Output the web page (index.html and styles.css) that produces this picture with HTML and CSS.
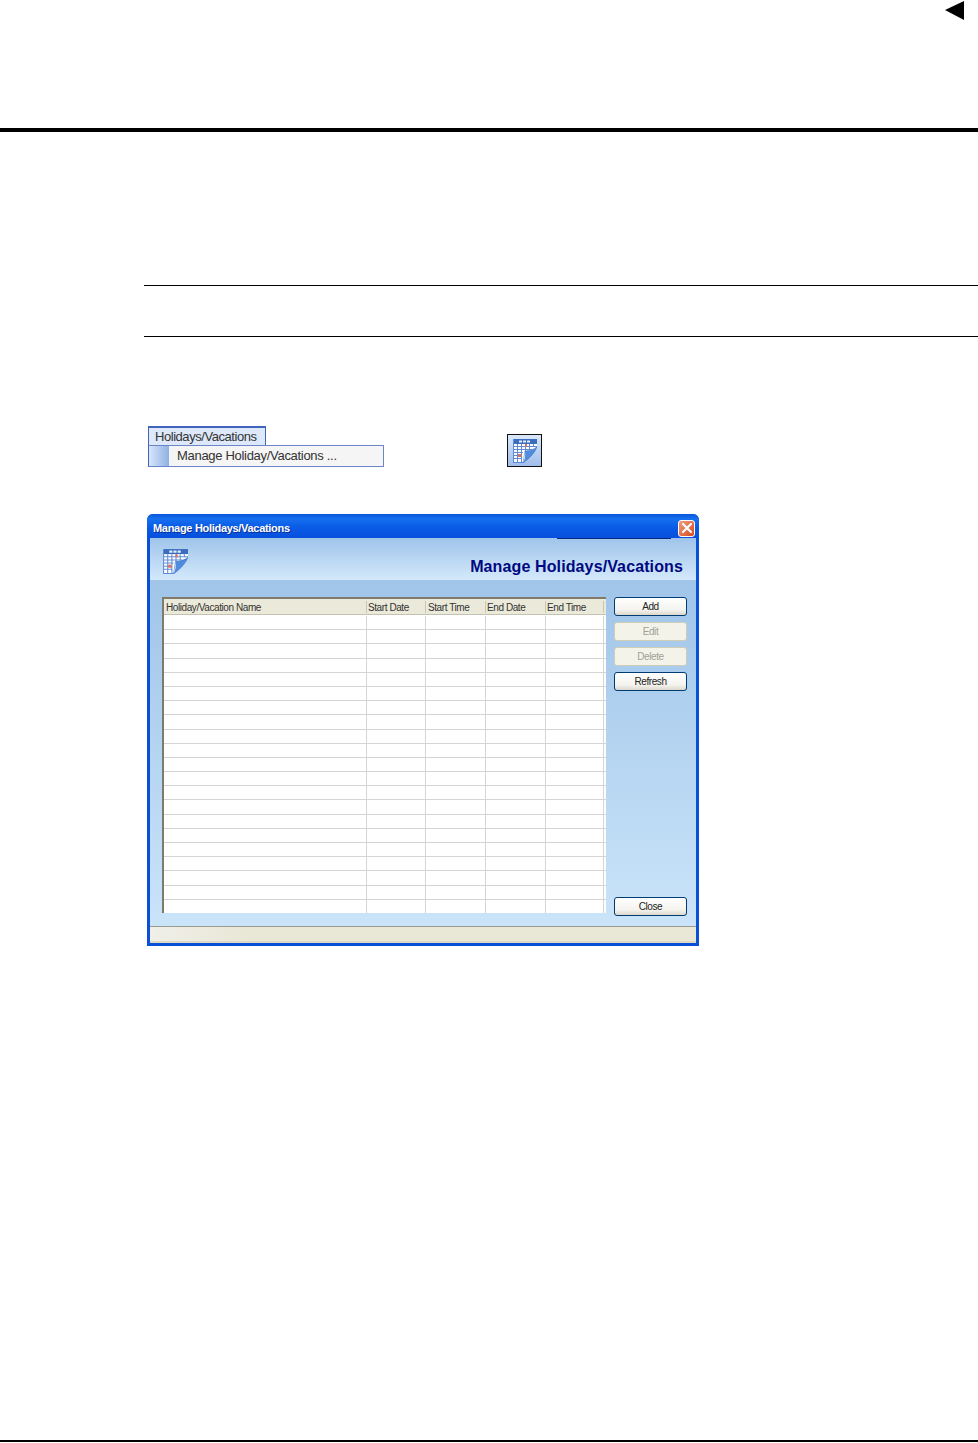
FILE: index.html
```html
<!DOCTYPE html>
<html lang="en">
<head>
<meta charset="utf-8">
<title>Manage Holidays/Vacations</title>
<link rel="stylesheet" href="styles.css">
</head>
<body>
<header class="top">
  <svg class="arrow" width="20" height="20" viewBox="0 0 20 20"><polygon points="0,10 19,1 19,20" fill="#000"/></svg>
</header>
<main class="content">
  <div class="note"></div>
  <div class="steps">
    <div class="menu">
      <div class="menu-tab">Holidays/Vacations</div>
      <div class="menu-item"><span class="menu-strip"></span><span class="menu-label">Manage Holiday/Vacations ...</span></div>
    </div>
    <div class="icon-btn">
      <svg width="25" height="25" viewBox="0 0 25 25"><use href="#cal"/></svg>
    </div>
  </div>
  <section class="dialog">
    <div class="titlebar">
      <span class="title">Manage Holidays/Vacations</span>
      <span class="close"><svg width="12" height="12" viewBox="0 0 12 12"><path d="M2 2 L10 10 M10 2 L2 10" stroke="#fff" stroke-width="2.2" stroke-linecap="round"/></svg></span>
      <span class="title-line"></span>
    </div>
    <div class="banner">
      <svg class="banner-icon" width="26" height="26" viewBox="0 0 25 25"><use href="#cal"/></svg>
      <h1 class="banner-title">Manage Holidays/Vacations</h1>
    </div>
    <div class="body">
      <div class="grid">
        <div class="grid-head">
          <div class="c1">Holiday/Vacation Name</div>
          <div class="c2">Start Date</div>
          <div class="c3">Start Time</div>
          <div class="c4">End Date</div>
          <div class="c5">End Time</div>
        </div>
        <div class="grid-rows">
          <div class="row"><i class="c1"></i><i class="c2"></i><i class="c3"></i><i class="c4"></i><i class="c5"></i></div>
          <div class="row"><i class="c1"></i><i class="c2"></i><i class="c3"></i><i class="c4"></i><i class="c5"></i></div>
          <div class="row"><i class="c1"></i><i class="c2"></i><i class="c3"></i><i class="c4"></i><i class="c5"></i></div>
          <div class="row"><i class="c1"></i><i class="c2"></i><i class="c3"></i><i class="c4"></i><i class="c5"></i></div>
          <div class="row"><i class="c1"></i><i class="c2"></i><i class="c3"></i><i class="c4"></i><i class="c5"></i></div>
          <div class="row"><i class="c1"></i><i class="c2"></i><i class="c3"></i><i class="c4"></i><i class="c5"></i></div>
          <div class="row"><i class="c1"></i><i class="c2"></i><i class="c3"></i><i class="c4"></i><i class="c5"></i></div>
          <div class="row"><i class="c1"></i><i class="c2"></i><i class="c3"></i><i class="c4"></i><i class="c5"></i></div>
          <div class="row"><i class="c1"></i><i class="c2"></i><i class="c3"></i><i class="c4"></i><i class="c5"></i></div>
          <div class="row"><i class="c1"></i><i class="c2"></i><i class="c3"></i><i class="c4"></i><i class="c5"></i></div>
          <div class="row"><i class="c1"></i><i class="c2"></i><i class="c3"></i><i class="c4"></i><i class="c5"></i></div>
          <div class="row"><i class="c1"></i><i class="c2"></i><i class="c3"></i><i class="c4"></i><i class="c5"></i></div>
          <div class="row"><i class="c1"></i><i class="c2"></i><i class="c3"></i><i class="c4"></i><i class="c5"></i></div>
          <div class="row"><i class="c1"></i><i class="c2"></i><i class="c3"></i><i class="c4"></i><i class="c5"></i></div>
          <div class="row"><i class="c1"></i><i class="c2"></i><i class="c3"></i><i class="c4"></i><i class="c5"></i></div>
          <div class="row"><i class="c1"></i><i class="c2"></i><i class="c3"></i><i class="c4"></i><i class="c5"></i></div>
          <div class="row"><i class="c1"></i><i class="c2"></i><i class="c3"></i><i class="c4"></i><i class="c5"></i></div>
          <div class="row"><i class="c1"></i><i class="c2"></i><i class="c3"></i><i class="c4"></i><i class="c5"></i></div>
          <div class="row"><i class="c1"></i><i class="c2"></i><i class="c3"></i><i class="c4"></i><i class="c5"></i></div>
          <div class="row"><i class="c1"></i><i class="c2"></i><i class="c3"></i><i class="c4"></i><i class="c5"></i></div>
          <div class="row last"><i class="c1"></i><i class="c2"></i><i class="c3"></i><i class="c4"></i><i class="c5"></i></div>
        </div>
      </div>
      <div class="actions">
        <button class="btn">Add</button>
        <button class="btn off">Edit</button>
        <button class="btn off">Delete</button>
        <button class="btn">Refresh</button>
        <button class="btn end">Close</button>
      </div>
    </div>
    <div class="status"></div>
  </section>
</main>
<footer class="bottom"></footer>
<svg class="defs" width="0" height="0">
  <defs>
    <g id="cal">
      <path d="M1 1 H25 V6 H1 Z" fill="#3a6cc0"/>
      <path d="M1 6 H25 V10 L11 25 H1 Z" fill="#fff"/>
      <path d="M1.5 1 V25 M1 8.5 H25 M1 11.5 H20 M1 14.5 H11 M1 17.5 H10 M1 20.5 H10 M1 24.5 H11 M5.5 6 V25 M9.5 6 V25 M13.5 6 V13 M17.5 6 V12 M21.5 6 V9" stroke="#5f8bd6" stroke-width="1" fill="none"/>
      <rect x="13" y="6" width="2" height="3" fill="#e0705c"/>
      <rect x="6" y="16" width="3" height="3" fill="#e0705c"/>
      <path d="M11 25 Q22 17 25 9 Q20 13 13 13 Q14 20 11 25 Z" fill="#4f8ce0"/>
      <path d="M25 9 Q20 13 13 13 L11 25 Q22 17 25 9 Z" fill="none" stroke="#2f62b8" stroke-width=".5"/>
      <path d="M7 3.5 H10 M11 3.5 H14 M15 3.5 H18" stroke="#e4eefc" stroke-width="2" fill="none"/>
    </g>
  </defs>
</svg>
</body>
</html>
```
FILE: styles.css
```css
* { box-sizing: border-box; }
html, body { margin: 0; padding: 0; }
body {
  width: 978px;
  height: 1443px;
  background: #fff;
  font-family: "Liberation Sans", Arial, sans-serif;
  display: flex;
  flex-direction: column;
  overflow: hidden;
}
.top {
  height: 132px;
  flex: none;
  border-bottom: 4px solid #000;
  display: flex;
  justify-content: flex-end;
  align-items: flex-start;
  padding-right: 13px;
}
.arrow { display: block; }
.content {
  flex: 1;
  padding-left: 144px;
  padding-top: 153px;
}
.note {
  height: 52px;
  border-top: 1px solid #000;
  border-bottom: 1px solid #000;
}
.steps {
  display: flex;
  align-items: flex-start;
  margin-top: 89px;
  margin-left: 4px;
}
.menu { width: 236px; color: #333; font-size: 13px; }
.menu-tab {
  width: 118px;
  height: 19px;
  background: #dde9fa;
  border: 1px solid #3f66bc;
  border-top-width: 2px;
  border-bottom: 0;
  padding-left: 6px;
  line-height: 17px;
  letter-spacing: -0.45px;
}
.menu-item {
  height: 22px;
  display: flex;
  background: #f5f5f5;
  border: 1px solid #6a86c8;
  border-left-color: #3f66bc;
}
.menu-strip {
  width: 20px;
  background: linear-gradient(90deg, #d8e6fa, #8fb0e4);
}
.menu-label { padding-left: 8px; line-height: 19px; letter-spacing: -0.3px; }
.icon-btn {
  width: 35px;
  height: 33px;
  margin-left: 123px;
  margin-top: 8px;
  border: 1px solid #111;
  background: linear-gradient(180deg, #dbe8fb, #9fbdea);
  display: flex;
  align-items: center;
  justify-content: center;
}
.dialog {
  width: 552px;
  height: 432px;
  margin-top: 47px;
  margin-left: 3px;
  display: flex;
  flex-direction: column;
  background: #0a4fd8;
  border-radius: 6px 6px 0 0;
  padding: 0 3px 3px 3px;
  position: relative;
}
.titlebar {
  height: 24px;
  margin: 0 -3px;
  padding: 4px 3px 0 6px;
  flex: none;
  border-radius: 6px 6px 0 0;
  background: linear-gradient(180deg, #0a54dc 0%, #1670ee 20%, #0a5be6 55%, #0650dc 100%);
  display: flex;
  align-items: center;
  justify-content: space-between;
}
.title {
  color: #fff;
  font-size: 11px;
  font-weight: 700;
  letter-spacing: -0.3px;
  text-shadow: 1px 1px 0 #0a2f96;
}
.close {
  width: 17px;
  height: 17px;
  margin-right: 1px;
  border: 1px solid #fff;
  border-radius: 3px;
  background: linear-gradient(135deg, #f0a080, #d8481c);
  display: flex;
  align-items: center;
  justify-content: center;
}
.title-line {
  position: absolute;
  left: 410px;
  top: 24px;
  width: 114px;
  height: 1px;
  background: #0a2a80;
}
.banner {
  height: 42px;
  flex: none;
  background: linear-gradient(180deg, #9fc4ea, #d4e9fb);
  display: flex;
  justify-content: space-between;
  padding: 10px 13px 0 12px;
}
.banner-icon { display: block; }
.banner-title {
  margin: 9px 0 0;
  color: #00087f;
  font-size: 16px;
  font-weight: 700;
  line-height: 20px;
  letter-spacing: 0.12px;
}
.body {
  flex: 1;
  display: flex;
  justify-content: space-between;
  padding: 17px 9px 10px 12px;
  background: linear-gradient(180deg, #a0c5e9, #cae4f9);
  border-bottom: 1px solid #9a9a90;
}
.grid {
  width: 444px;
  margin-bottom: 3px;
  background: #fff;
  border-top: 2px solid #7f7a6c;
  border-left: 2px solid #7f7a6c;
  display: flex;
  flex-direction: column;
}
.grid-head {
  height: 16px;
  flex: none;
  display: flex;
  background: #ebe9d9;
  border-bottom: 1px solid #c4c2b0;
  font-size: 10px;
  letter-spacing: -0.42px;
  color: #333;
  line-height: 17px;
}
.grid-head div {
  padding-left: 1px;
  white-space: nowrap;
  overflow: hidden;
  background: linear-gradient(#c8c6b4, #c8c6b4) no-repeat right 2px / 1px 12px;
}
.grid-head .c1, .grid-head .c3 { padding-left: 2px; }
.c1 { width: 203px; }
.c2 { width: 59px; }
.c3 { width: 60px; }
.c4 { width: 60px; }
.c5 { width: 58px; }
.grid-rows {
  flex: 1;
  display: flex;
  flex-direction: column;
  padding-top: 1px;
}
.row {
  flex: 1;
  display: flex;
  border-bottom: 1px solid #d4d4d4;
}
.row.last { border-bottom: 0; }
.row i {
  display: block;
  border-right: 1px solid #d4d4d4;
}
.actions {
  width: 73px;
  display: flex;
  flex-direction: column;
  gap: 6px;
}
.btn {
  height: 19px;
  padding: 0 0 1px;
  font-family: "Liberation Sans", Arial, sans-serif;
  font-size: 10px;
  letter-spacing: -0.42px;
  color: #222;
  border: 1px solid #003c74;
  border-radius: 3px;
  background: linear-gradient(180deg, #fff, #f4f3ee 70%, #dcd8cc);
}
.btn.off {
  color: #a1a192;
  border-color: #cfccb8;
  background: #f4f3ea;
}
.btn.end { margin-top: auto; }
.status {
  height: 16px;
  flex: none;
  background: linear-gradient(90deg, #f0efe8, #e9e7d6 18%);
  border-bottom: 2px solid #dcdac6;
}
.bottom {
  height: 2px;
  flex: none;
  margin-bottom: 1px;
  background: #000;
}
.defs { position: absolute; }
```
